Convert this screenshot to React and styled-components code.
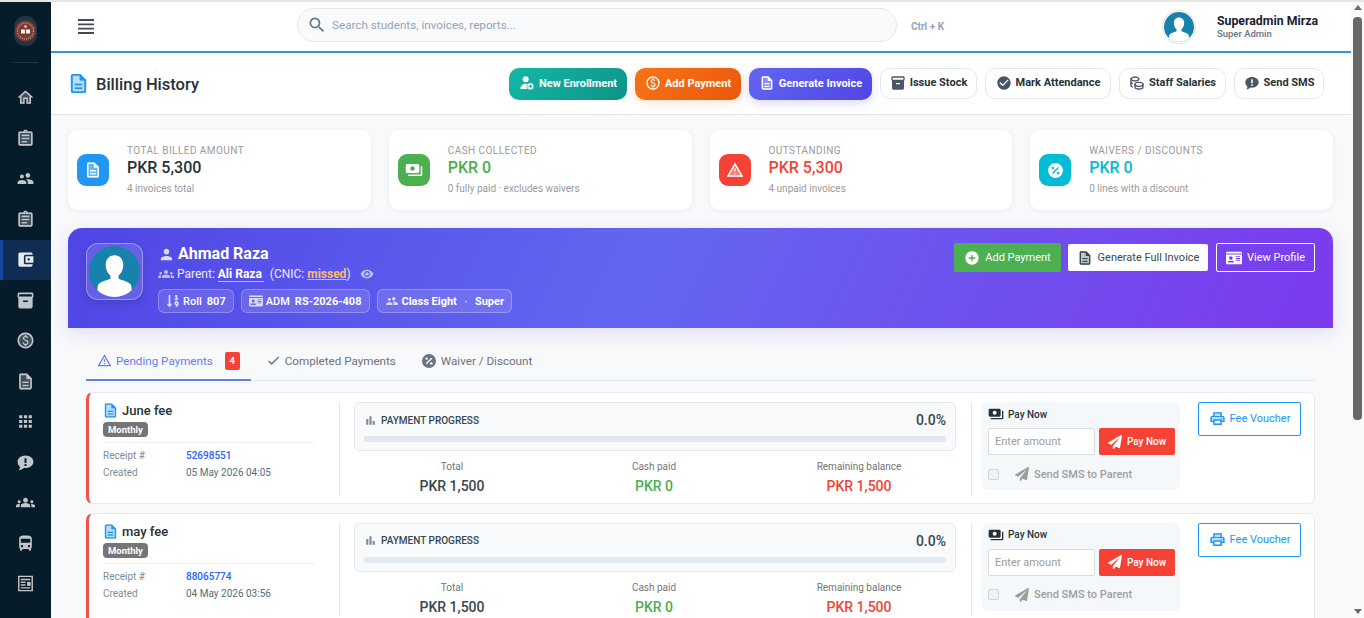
import React from "react";
import styled, { createGlobalStyle } from "styled-components";
import { FaIdCard, FaPaperPlane, FaSortNumericDown } from "react-icons/fa";
import { TbCoins } from "react-icons/tb";
import {
  MdAddCircle,
  MdAccountBalanceWallet,
  MdApps,
  MdAssignment,
  MdBarChart,
  MdCheck,
  MdCheckCircle,
  MdDescription,
  MdDirectionsBus,
  MdGroups,
  MdHome,
  MdInventory2,
  MdOutlineAssignment,
  MdOutlineDescription,
  MdOutlineHome,
  MdOutlinePaid,
  MdOutlinePrint,
  MdOutlineWarningAmber,
  MdPaid,
  MdPayments,
  MdPerson,
  MdPrint,
  MdSearch,
  MdSupervisorAccount,
  MdVisibility,
  MdWarning,
} from "react-icons/md";

const GlobalStyle = createGlobalStyle`
  html, body {
    margin: 0;
    height: 100%;
    overflow: hidden;
  }
  body {
    font-family: Roboto, "Liberation Sans", sans-serif;
    color: #263238;
  }
  * {
    box-sizing: border-box;
  }
`;

const Shell = styled.div`
  display: flex;
  height: 618px;
  border-top: 2px solid #e6e6e6;
  background: #f8f9fb;
`;

const Sidebar = styled.aside`
  width: 51px;
  flex: none;
  background: #071c2b;
  display: flex;
  flex-direction: column;
  align-items: stretch;
  overflow: hidden;
`;

const LogoWrap = styled.div`
  height: 61px;
  flex: none;
  margin: 0 13px;
  display: flex;
  align-items: center;
  justify-content: center;
  border-bottom: 1px solid #1f3442;
  padding-bottom: 3px;
`;

const NavItem = styled.div`
  height: 40.5px;
  flex: none;
  display: flex;
  align-items: center;
  justify-content: center;
  color: ${(p) => (p.$active ? "#e6e9ed" : "#c2c6ca")};
  font-size: 19px;
  border-left: 3px solid ${(p) => (p.$active ? "#1748a0" : "transparent")};
  padding-right: 3px;
  background: ${(p) => (p.$active ? "#0f2c52" : "transparent")};
`;

const NavList = styled.nav`
  flex: none;
  display: flex;
  flex-direction: column;
  padding-top: 14.5px;
`;

const Main = styled.main`
  flex: 1;
  min-width: 0;
  overflow: hidden;
`;

const Topbar = styled.header`
  height: 51px;
  background: #fff;
  border-bottom: 2px solid #3498db;
  display: flex;
  align-items: center;
  padding: 0 33px 0 27px;
`;

const MenuButton = styled.div`
  color: #3f4b5b;
  display: flex;
  width: 219px;
`;

const Search = styled.div`
  width: 600px;
  height: 34px;
  margin-bottom: 3px;
  border: 1px solid #e2e8f0;
  border-radius: 17px;
  background: #f8fafc;
  display: flex;
  align-items: center;
  gap: 5px;
  padding-left: 9px;
  color: #64748b;
  font-size: 20px;
  flex: none;
  span {
    font-size: 11.7px;
    color: #94a3b8;
  }
`;

const Hint = styled.span`
  font-size: 10px;
  font-weight: 700;
  color: #94a3b8;
  margin-left: 14px;
  flex: 1;
`;

const UserBlock = styled.div`
  display: flex;
  align-items: center;
  gap: 21px;
`;

const UserName = styled.div`
  font-size: 12.3px;
  font-weight: 700;
  color: #1a2233;
  line-height: 13px;
`;

const UserRole = styled.div`
  font-size: 9.5px;
  font-weight: 500;
  color: #64748b;
  line-height: 11px;
`;

const PageHeader = styled.div`
  height: 62px;
  background: #fff;
  border-bottom: 1px solid #e2e2e2;
  display: flex;
  align-items: center;
  padding: 0 27px 0 16px;
`;

const PageTitle = styled.h1`
  margin: 2px 0 0 6px;
  font-size: 16.5px;
  font-weight: 500;
  color: #263238;
  flex: 1;
`;

const TitleIcon = styled.span`
  color: #2196f3;
  font-size: 23px;
  display: flex;
`;

const Actions = styled.div`
  display: flex;
  gap: 8px;
  align-items: flex-start;
  padding-top: 1px;
`;

const ActionButton = styled.div`
  height: ${(p) => (p.$grad ? 32 : 31)}px;
  padding: 0 0 2px;
  border-radius: 10px;
  display: flex;
  align-items: center;
  justify-content: center;
  gap: 4px;
  font-size: 11px;
  font-weight: 700;
  width: ${(p) => p.$w}px;
  white-space: nowrap;
  color: ${(p) => (p.$grad ? "#fff" : "#263238")};
  background: ${(p) => p.$grad || "#fff"};
  border: ${(p) => (p.$grad ? "none" : "1px solid #e2e8f0")};
  box-shadow: ${(p) => p.$glow || "none"};
  svg {
    font-size: 16px;
    flex: none;
    color: ${(p) => (p.$grad ? "#fff" : "#4a5568")};
  }
`;

const Content = styled.div`
  padding: 15px 17px 0;
  margin-right: 1px;
`;

const StatGrid = styled.div`
  display: grid;
  grid-template-columns: repeat(4, 1fr);
  gap: 18px;
  margin-bottom: 18px;
`;

const StatCard = styled.div`
  height: 80px;
  background: #fff;
  border-radius: 10px;
  box-shadow: 0 1px 5px rgba(30, 41, 59, 0.07);
  display: flex;
  align-items: center;
  padding: 0 9px;
  gap: 18px;
`;

const StatIcon = styled.div`
  width: 32px;
  height: 32px;
  flex: none;
  border-radius: 9px;
  background: ${(p) => p.$color};
  color: #fff;
  font-size: 18px;
  display: flex;
  align-items: center;
  justify-content: center;
`;

const StatLabel = styled.div`
  font-size: 10px;
  letter-spacing: 0.45px;
  text-transform: uppercase;
  color: #9a9a9a;
  line-height: 12px;
`;

const StatValue = styled.div`
  font-size: 16px;
  font-weight: 500;
  color: ${(p) => p.$color};
  line-height: 22px;
`;

const StatSub = styled.div`
  font-size: 10px;
  color: #9a9a9a;
  line-height: 12px;
  margin-top: 4px;
  margin-bottom: 1px;
`;

const Banner = styled.section`
  height: 100px;
  border-radius: 14px 14px 0 0;
  background: linear-gradient(115deg, #4f46e5 0%, #6366f1 45%, #7c3aed 100%);
  box-shadow: 0 6px 18px rgba(79, 70, 229, 0.14);
  display: flex;
  align-items: flex-start;
  padding: 15px 18px;
  color: #fff;
`;

const AvatarFrame = styled.div`
  width: 57px;
  height: 57px;
  flex: none;
  padding: 2px;
  border-radius: 12px;
  background: rgba(255, 255, 255, 0.12);
  border: 1px solid rgba(255, 255, 255, 0.35);
  box-shadow: 0 3px 8px rgba(30, 27, 75, 0.2);
  display: flex;
  align-items: center;
  justify-content: center;
  margin-right: 15px;
`;

const BannerInfo = styled.div`
  flex: 1;
  display: flex;
  flex-direction: column;
  padding-top: 1px;
`;

const StudentName = styled.div`
  display: flex;
  align-items: center;
  gap: 3px;
  font-size: 16px;
  font-weight: 700;
  line-height: 20px;
  svg {
    font-size: 17px;
    opacity: 0.8;
  }
`;

const ParentLine = styled.div`
  display: flex;
  align-items: center;
  font-size: 12px;
  line-height: 20px;
  color: #eceafd;
  white-space: pre;
  b {
    font-weight: 700;
    color: #fff;
    border-bottom: 1px solid rgba(255, 255, 255, 0.6);
    line-height: 14px;
    padding-right: 2px;
  }
  u {
    font-weight: 700;
    color: #fdba74;
  }
  svg {
    font-size: 16px;
    opacity: 0.7;
    margin-right: 3px;
  }
`;

const EyeIcon = styled(MdVisibility)`
  && {
    font-size: 14px;
    margin: 0 0 0 9px;
  }
`;

const ChipRow = styled.div`
  display: flex;
  gap: 7px;
  margin-top: 5px;
`;

const Chip = styled.div`
  height: 24px;
  padding: 0 7px;
  border-radius: 6px;
  background: rgba(255, 255, 255, 0.12);
  border: 1px solid rgba(255, 255, 255, 0.25);
  display: flex;
  align-items: center;
  gap: 5px;
  font-size: 11px;
  font-weight: 500;
  white-space: nowrap;
  b {
    font-weight: 700;
  }
  span {
    margin: 0 2.5px;
    opacity: 0.8;
  }
  svg {
    font-size: 14px;
    opacity: 0.75;
    margin-right: -2px;
  }
`;

const BannerActions = styled.div`
  display: flex;
  gap: 7px;
  align-items: center;
`;

const BannerButton = styled.div`
  height: ${(p) => (p.$variant === "light" ? 27 : 29)}px;
  margin-left: ${(p) => (p.$variant === "ghost" ? 1 : 0)}px;
  border-radius: 2px;
  display: flex;
  align-items: center;
  gap: 5px;
  font-size: 11px;
  white-space: nowrap;
  width: ${(p) => p.$w}px;
  justify-content: center;
  color: ${(p) => (p.$variant === "light" ? "#37474f" : "#fff")};
  background: ${(p) =>
    p.$variant === "green"
      ? "#4caf50"
      : p.$variant === "light"
        ? "#fff"
        : "transparent"};
  border: ${(p) => (p.$variant === "ghost" ? "1px solid #fff" : "none")};
  svg {
    font-size: 16px;
    flex: none;
  }
`;

const Panel = styled.section`
  padding: 0 18px;
`;

const Tabs = styled.div`
  height: 53px;
  padding-top: 14px;
  display: flex;
  border-bottom: 1px solid #e0e7f3;
  margin-bottom: 11px;
`;

const Tab = styled.div`
  display: flex;
  align-items: center;
  gap: 4px;
  padding: 0 ${(p) => (p.$active ? 11 : 10)}px 0 ${(p) => (p.$active ? 11 : 7)}px;
  margin-right: 8px;
  height: 39px;
  font-size: 11.65px;
  color: ${(p) => (p.$active ? "#667eea" : "#6b7280")};
  border-bottom: 2px solid ${(p) => (p.$active ? "#667eea" : "transparent")};
  svg {
    font-size: 15px;
    flex: none;
  }
`;

const TabBadge = styled.span`
  background: #f44336;
  color: #fff;
  font-size: 9.5px;
  font-weight: 700;
  width: 15px;
  height: 18px;
  border-radius: 2px;
  margin-left: 8px;
  display: flex;
  align-items: center;
  justify-content: center;
`;

const FeeList = styled.div`
  display: flex;
  flex-direction: column;
  gap: 8.5px;
`;

const FeeCard = styled.article`
  height: 112px;
  flex: none;
  background: #fff;
  border: 1px solid #e8ecf2;
  border-left: 3px solid #ef5350;
  border-radius: 7px;
  display: flex;
  align-items: flex-start;
  padding: 9px 13px 0 14px;
`;

const InfoCol = styled.div`
  width: 211px;
  flex: none;
  margin-right: 25px;
`;

const FeeTitle = styled.div`
  display: flex;
  align-items: center;
  gap: 3px;
  font-size: 13px;
  font-weight: 500;
  color: #263238;
  line-height: 17px;
  svg {
    font-size: 17px;
    color: #2196f3;
    margin-left: -1px;
  }
`;

const FeeBadge = styled.span`
  display: inline-block;
  background: #757575;
  color: #fff;
  font-size: 9.5px;
  font-weight: 700;
  line-height: 15px;
  padding: 0 5px;
  border-radius: 4px;
  margin-top: 3px;
  vertical-align: top;
`;

const MetaRows = styled.dl`
  margin: 4px 0 0;
  padding-top: 6px;
  border-top: 1px solid #eceff4;
  display: grid;
  grid-template-columns: 83px 1fr;
  row-gap: 3px;
  font-size: 10px;
  line-height: 14px;
  dt {
    color: #78909c;
  }
  dd {
    margin: 0;
    color: #546e7a;
  }
`;

const ReceiptNo = styled.dd`
  && {
    color: #2962ff;
    font-weight: 500;
  }
`;

const ProgressCol = styled.div`
  width: 633px;
  flex: none;
  height: 93px;
  border-left: 1px solid #e5e8ee;
  border-right: 1px solid #e5e8ee;
  padding: 0 15px 0 14px;
`;

const ProgressBox = styled.div`
  height: 49px;
  background: #f8fafc;
  border: 1px solid #e3e8ef;
  border-radius: 6px;
  padding: 7px 9px;
`;

const ProgressHead = styled.div`
  display: flex;
  align-items: center;
  justify-content: space-between;
  height: 20px;
  font-size: 10px;
  font-weight: 500;
  color: #37474f;
  margin-bottom: 6px;
  strong {
    font-size: 14px;
    font-weight: 500;
  }
`;

const HeadLabel = styled.span`
  display: flex;
  align-items: center;
  gap: 4px;
  svg {
    font-size: 13px;
    color: #78909c;
  }
`;

const ProgressTrack = styled.div`
  height: 6px;
  border-radius: 3px;
  background: #e2e8f0;
`;

const Totals = styled.div`
  display: grid;
  grid-template-columns: 196px 208px 202px;
  margin-top: 9px;
  text-align: center;
`;

const TotalLabel = styled.div`
  font-size: 10px;
  color: #757575;
  line-height: 13px;
`;

const TotalValue = styled.div`
  font-size: 14px;
  font-weight: 500;
  color: ${(p) => p.$color};
  line-height: 18px;
  margin-top: 4px;
`;

const PayBox = styled.div`
  width: 198px;
  height: 88px;
  flex: none;
  margin-left: 10px;
  margin-right: 18px;
  background: #f5f8fb;
  border-radius: 6px;
  padding: 4px 5px 0 6px;
`;

const PayHead = styled.div`
  display: flex;
  align-items: center;
  gap: 4px;
  height: 16px;
  font-size: 10px;
  font-weight: 500;
  color: #263238;
  svg {
    font-size: 16px;
  }
`;

const PayRow = styled.div`
  display: flex;
  gap: 4px;
  margin-top: 6px;
`;

const AmountInput = styled.input`
  width: 107px;
  height: 27px;
  border: 1px solid #dcdcdc;
  border-radius: 2px;
  background: #fff;
  padding: 0 6px;
  font-family: inherit;
  font-size: 11px;
  &::placeholder {
    color: #9e9e9e;
  }
`;

const PayButton = styled.div`
  width: 76px;
  height: 27px;
  background: #f44336;
  border-radius: 2px;
  color: #fff;
  font-size: 10px;
  font-weight: 500;
  display: flex;
  align-items: center;
  justify-content: center;
  gap: 5px;
  svg {
    font-size: 14px;
  }
`;

const SmsRow = styled.div`
  display: flex;
  align-items: center;
  margin-top: 11px;
  height: 16px;
  font-size: 11px;
  font-weight: 500;
  color: #9e9e9e;
  svg {
    font-size: 14px;
    margin: 0 5px 0 16px;
  }
`;

const Check = styled.span`
  width: 11px;
  height: 11px;
  flex: none;
  border: 1px solid #d5d5d5;
  border-radius: 2px;
  background: #f1f1f1;
`;

const VoucherButton = styled.div`
  width: 103px;
  height: 34px;
  flex: none;
  border: 1px solid #2196f3;
  border-radius: 2px;
  color: #2196f3;
  font-size: 11px;
  padding-bottom: 1px;
  display: flex;
  align-items: center;
  justify-content: center;
  gap: 4px;
  svg {
    font-size: 17px;
  }
`;

const Scrollbar = styled.div`
  width: 13px;
  flex: none;
  background: #f9f9f9;
  display: flex;
  flex-direction: column;
  align-items: center;
  padding: 3px 0 4px;
`;

const Arrow = styled.span`
  width: 0;
  height: 0;
  border-left: 4px solid transparent;
  border-right: 4px solid transparent;
  border-${(p) => (p.$up ? "bottom" : "top")}: 5px solid #6b6b6b;
`;

const Thumb = styled.div`
  width: 9px;
  height: 403px;
  margin-top: 7px;
  margin-bottom: auto;
  border-radius: 4px;
  background: #686868;
`;

const DuoWrap = styled.span`
  display: inline-grid;
  line-height: 0;
  & > svg {
    grid-area: 1 / 1;
  }
  & > svg:first-child {
    opacity: 0.3;
  }
`;

const Duo = ({ fill: Fill, line: Line }) => (
  <DuoWrap>
    <Fill />
    <Line />
  </DuoWrap>
);

const ClassIcon = styled(MdSupervisorAccount)`
  transform: scaleX(-1);
`;

const PercentBadge = ({ color = "currentColor", mark = "#fff", size = 16 }) => (
  <svg width={size} height={size} viewBox="0 0 16 16">
    <circle cx="8" cy="8" r="7" fill={color} />
    <path d="M5.2 10.8l5.600-5.600" stroke={mark} strokeWidth="1.300" />
    <circle cx="5.600" cy="5.600" r="1.200" fill={mark} />
    <circle cx="10.400" cy="10.400" r="1.200" fill={mark} />
  </svg>
);

const MenuLines = () => (
  <svg width="16" height="15" viewBox="0 0 16 15">
    <path d="M0 1h16M0 5.300h16M0 9.700h16M0 14h16" stroke="currentColor" strokeWidth="1.800" />
  </svg>
);

const ChatAlert = (props) => (
  <svg width="1em" height="1em" viewBox="0 0 24 24" {...props}>
    <path
      fill="currentColor"
      fillRule="evenodd"
      d="M12 3c5.500 0 10 3.500 10 8s-4.500 8-10 8c-.8 0-1.500-.1-2.200-.2C8.300 20.400 6 21.500 3.500 21.500c1-1.200 1.600-2.500 1.700-4C3.200 16 2 13.600 2 11c0-4.500 4.500-8 10-8zm-1.200 3.500v6h2.400v-6h-2.400zm0 7.500v2.300h2.400V14h-2.400z"
    />
  </svg>
);

const NewsIcon = (props) => (
  <svg width="1em" height="1em" viewBox="0 0 24 24" {...props}>
    <path
      fill="none"
      stroke="currentColor"
      strokeWidth="1.800"
      d="M3.500 3h17v18h-17zM6 7h12M6 10.500h6M6 14h6M6 17.500h12"
    />
    <path fill="currentColor" d="M14 10h4.500v5H14z" />
  </svg>
);

const EnrollIcon = ({ mark }) => (
  <svg width="1em" height="1em" viewBox="0 0 24 24">
    <circle cx="10" cy="6.500" r="4.500" fill="currentColor" />
    <path d="M2 21c0-5 3.500-8 8-8 1.500 0 2.800.3 4 1l-1 7z" fill="currentColor" />
    <circle cx="17" cy="17" r="5.500" fill="currentColor" stroke={mark} strokeWidth="1" />
    <path d="M17 14v6M14 17h6" stroke={mark} strokeWidth="1.500" />
  </svg>
);

const AvatarPic = ({ size }) => (
  <svg width={size} height={size} viewBox="0 0 50 50">
    <defs>
      <clipPath id={`av${size}`}>
        <circle cx="25" cy="25" r="25" />
      </clipPath>
    </defs>
    <g clipPath={`url(#av${size})`}>
      <rect width="50" height="50" fill="#1782ab" />
      <path d="M25 9c5.200 0 8.600 3.800 8.600 9.500 0 4.500-2 8.600-4.600 10.500v3c2.400 1.400 8.800 2.400 11.400 5 1.400 1.400 1.600 6 1.600 13.500H8c0-7.500.2-12.100 1.600-13.500 2.600-2.600 9-3.600 11.400-5v-3c-2.600-1.900-4.600-6-4.600-10.500C16.400 12.800 19.800 9 25 9z" fill="#fff" />
    </g>
  </svg>
);

const SmallAvatar = styled.div`
  width: 34px;
  height: 34px;
  padding: 1px;
  border: 1px solid #e2e2e2;
  border-radius: 50%;
  display: flex;
`;

const Logo = () => (
  <svg width="23" height="30" viewBox="0 0 23 30">
    <rect width="23" height="30" rx="11" fill="#26343e" />
    <circle cx="11.500" cy="15" r="10.500" fill="#7d3a34" />
    <circle cx="11.500" cy="15" r="8" fill="none" stroke="#c9a79f" strokeWidth="1.200" strokeDasharray="1 1.200" />
    <path d="M7 13.500h4v4H7zM12 13.500h4v4h-4z" fill="#f4f1ea" />
    <circle cx="11.500" cy="10.500" r="1.300" fill="#e7d8c9" />
  </svg>
);

const navIcons = [
  <Duo fill={MdHome} line={MdOutlineHome} />,
  <Duo fill={MdAssignment} line={MdOutlineAssignment} />,
  <ClassIcon />,
  <Duo fill={MdAssignment} line={MdOutlineAssignment} />,
  <MdAccountBalanceWallet />,
  <MdInventory2 />,
  <Duo fill={MdPaid} line={MdOutlinePaid} />,
  <Duo fill={MdDescription} line={MdOutlineDescription} />,
  <MdApps />,
  <ChatAlert />,
  <MdGroups />,
  <MdDirectionsBus />,
  <NewsIcon />,
  <MdPerson />,
];

const stats = [
  { label: "Total billed amount", value: "PKR 5,300", sub: "4 invoices total", bg: "#2196f3", color: "#263238", icon: <Duo fill={MdDescription} line={MdOutlineDescription} /> },
  { label: "Cash collected", value: "PKR 0", sub: "0 fully paid · excludes waivers", bg: "#4caf50", color: "#4caf50", icon: <MdPayments /> },
  { label: "Outstanding", value: "PKR 5,300", sub: "4 unpaid invoices", bg: "#f44336", color: "#f44336", icon: <Duo fill={MdWarning} line={MdOutlineWarningAmber} /> },
  { label: "Waivers / Discounts", value: "PKR 0", sub: "0 lines with a discount", bg: "#00bcd4", color: "#00bcd4", icon: <PercentBadge color="#fff" mark="#00bcd4" size={17} /> },
];

const fees = [
  { title: "June fee", receipt: "52698551", created: "05 May 2026 04:05" },
  { title: "may fee", receipt: "88065774", created: "04 May 2026 03:56" },
];

const Doc = () => <Duo fill={MdDescription} line={MdOutlineDescription} />;

const App = () => {
  return (
    <>
      <GlobalStyle />
      <Shell>
        <Sidebar>
          <LogoWrap>
            <Logo />
          </LogoWrap>
          <NavList>
            {navIcons.map((icon, i) => (
              <NavItem key={i} $active={i === 4}>
                {icon}
              </NavItem>
            ))}
          </NavList>
        </Sidebar>
        <Main>
          <Topbar>
            <MenuButton>
              <MenuLines />
            </MenuButton>
            <Search>
              <MdSearch />
              <span>Search students, invoices, reports...</span>
            </Search>
            <Hint>Ctrl + K</Hint>
            <UserBlock>
              <SmallAvatar>
                <AvatarPic size={30} />
              </SmallAvatar>
              <div>
                <UserName>Superadmin Mirza</UserName>
                <UserRole>Super Admin</UserRole>
              </div>
            </UserBlock>
          </Topbar>
          <PageHeader>
            <TitleIcon>
              <Doc />
            </TitleIcon>
            <PageTitle>Billing History</PageTitle>
            <Actions>
              <ActionButton $w={118} $grad="linear-gradient(135deg, #14b8a6, #0d9488)">
                <EnrollIcon mark="#12a594" />
                New Enrollment
              </ActionButton>
              <ActionButton $w={106} $grad="linear-gradient(135deg, #f97316, #ea580c)" $glow="0 3px 10px rgba(249, 115, 22, 0.2)">
                <MdOutlinePaid />
                Add Payment
              </ActionButton>
              <ActionButton $w={123} $grad="linear-gradient(135deg, #6366f1, #4f46e5)" $glow="0 3px 10px rgba(99, 102, 241, 0.25)">
                <Doc />
                Generate Invoice
              </ActionButton>
              <ActionButton $w={97}>
                <MdInventory2 />
                Issue Stock
              </ActionButton>
              <ActionButton $w={126}>
                <MdCheckCircle />
                Mark Attendance
              </ActionButton>
              <ActionButton $w={107}>
                <TbCoins />
                Staff Salaries
              </ActionButton>
              <ActionButton $w={90}>
                <ChatAlert />
                Send SMS
              </ActionButton>
            </Actions>
          </PageHeader>
          <Content>
            <StatGrid>
              {stats.map((s) => (
                <StatCard key={s.label}>
                  <StatIcon $color={s.bg}>{s.icon}</StatIcon>
                  <div>
                    <StatLabel>{s.label}</StatLabel>
                    <StatValue $color={s.color}>{s.value}</StatValue>
                    <StatSub>{s.sub}</StatSub>
                  </div>
                </StatCard>
              ))}
            </StatGrid>
            <Banner>
              <AvatarFrame>
                <AvatarPic size={51} />
              </AvatarFrame>
              <BannerInfo>
                <StudentName>
                  <MdPerson />
                  Ahmad Raza
                </StudentName>
                <ParentLine>
                  <MdGroups />
                  Parent: <b>Ali Raza</b>  (CNIC: <u>missed</u>)
                  <EyeIcon />
                </ParentLine>
                <ChipRow>
                  <Chip>
                    <FaSortNumericDown />
                    Roll
                    <b>807</b>
                  </Chip>
                  <Chip>
                    <FaIdCard />
                    ADM
                    <b>RS-2026-408</b>
                  </Chip>
                  <Chip>
                    <ClassIcon />
                    <b>Class Eight</b>
                    <span>·</span>
                    <b>Super</b>
                  </Chip>
                </ChipRow>
              </BannerInfo>
              <BannerActions>
                <BannerButton $variant="green" $w={107}>
                  <MdAddCircle />
                  Add Payment
                </BannerButton>
                <BannerButton $variant="light" $w={140}>
                  <Doc />
                  Generate Full Invoice
                </BannerButton>
                <BannerButton $variant="ghost" $w={99}>
                  <FaIdCard />
                  View Profile
                </BannerButton>
              </BannerActions>
            </Banner>
            <Panel>
              <Tabs>
                <Tab $active>
                  <MdOutlineWarningAmber />
                  Pending Payments
                  <TabBadge>4</TabBadge>
                </Tab>
                <Tab>
                  <MdCheck />
                  Completed Payments
                </Tab>
                <Tab>
                  <PercentBadge color="#6b7280" />
                  Waiver / Discount
                </Tab>
              </Tabs>
              <FeeList>
                {fees.map((f) => (
                  <FeeCard key={f.receipt}>
                    <InfoCol>
                      <FeeTitle>
                        <Doc />
                        {f.title}
                      </FeeTitle>
                      <FeeBadge>Monthly</FeeBadge>
                      <MetaRows>
                        <dt>Receipt #</dt>
                        <ReceiptNo>{f.receipt}</ReceiptNo>
                        <dt>Created</dt>
                        <dd>{f.created}</dd>
                      </MetaRows>
                    </InfoCol>
                    <ProgressCol>
                      <ProgressBox>
                        <ProgressHead>
                          <HeadLabel>
                            <MdBarChart />
                            PAYMENT PROGRESS
                          </HeadLabel>
                          <strong>0.0%</strong>
                        </ProgressHead>
                        <ProgressTrack />
                      </ProgressBox>
                      <Totals>
                        <div>
                          <TotalLabel>Total</TotalLabel>
                          <TotalValue $color="#37474f">PKR 1,500</TotalValue>
                        </div>
                        <div>
                          <TotalLabel>Cash paid</TotalLabel>
                          <TotalValue $color="#4caf50">PKR 0</TotalValue>
                        </div>
                        <div>
                          <TotalLabel>Remaining balance</TotalLabel>
                          <TotalValue $color="#f44336">PKR 1,500</TotalValue>
                        </div>
                      </Totals>
                    </ProgressCol>
                    <PayBox>
                      <PayHead>
                        <MdPayments />
                        Pay Now
                      </PayHead>
                      <PayRow>
                        <AmountInput placeholder="Enter amount" />
                        <PayButton>
                          <FaPaperPlane />
                          Pay Now
                        </PayButton>
                      </PayRow>
                      <SmsRow>
                        <Check />
                        <FaPaperPlane />
                        Send SMS to Parent
                      </SmsRow>
                    </PayBox>
                    <VoucherButton>
                      <Duo fill={MdPrint} line={MdOutlinePrint} />
                      Fee Voucher
                    </VoucherButton>
                  </FeeCard>
                ))}
              </FeeList>
            </Panel>
          </Content>
        </Main>
        <Scrollbar>
          <Arrow $up />
          <Thumb />
          <Arrow />
        </Scrollbar>
      </Shell>
    </>
  );
};

export default App;
